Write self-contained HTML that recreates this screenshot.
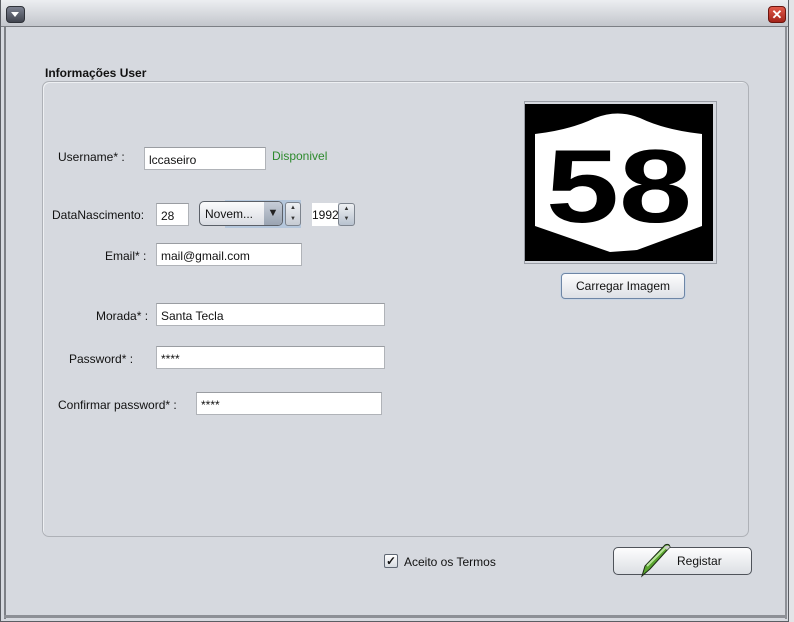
<!DOCTYPE html>
<html><head><style>
*{margin:0;padding:0;box-sizing:border-box}
body{width:794px;height:622px;background:#d6d9df;font-family:"Liberation Sans",sans-serif;font-size:12px;color:#111;position:relative;overflow:hidden}
.a{position:absolute}
.tf{position:absolute;background:#fff;border:1px solid #b0b3b8;border-top-color:#9a9da2;height:23px;padding:5px 0 0 4px;font-size:12px}
.lb{position:absolute;font-size:12px}
</style></head><body>
<div class="a" style="left:0;top:0;width:789px;height:622px;background:#d6d9df;border:1px solid #5b5e64;border-top:none"></div>
<div class="a" style="left:1px;top:0;width:787px;height:27px;background:linear-gradient(#eceef1,#c3c6cc);border-bottom:1px solid #7c7f85"></div>
<div class="a" style="left:4px;top:27px;width:2px;height:592px;background:#7d8086"></div>
<div class="a" style="left:785px;top:27px;width:2px;height:592px;background:#8d9096"></div>
<div class="a" style="left:4px;top:615px;width:783px;height:3px;background:#8d9096"></div>
<div class="a" style="left:789px;top:0;width:5px;height:622px;background:#e3e4e7"></div>
<div class="a" style="left:6px;top:6px;width:19px;height:17px;border-radius:4px;background:linear-gradient(#7c8190,#41454f);border:1px solid #2f3239"></div>
<div class="a" style="left:11px;top:12px;width:0;height:0;border-left:4px solid transparent;border-right:4px solid transparent;border-top:5px solid #fff"></div>
<div class="a" style="left:768px;top:6px;width:18px;height:17px;border-radius:4px;background:linear-gradient(#e05a4a,#a3231a);border:1px solid #6b1610;color:#fff;font-weight:bold;font-size:13px;line-height:15px;text-align:center">✕</div>
<div class="a" style="left:45px;top:66px;font-weight:bold;font-size:12px">Informações User</div>
<div class="a" style="left:42px;top:81px;width:707px;height:456px;border:1px solid #aeb1b7;border-radius:7px;box-shadow:inset 1px 1px 0 #eef0f3"></div>
<div class="lb" style="left:58px;top:150px">Username* :</div>
<div class="tf" style="left:144px;top:147px;width:122px">lccaseiro</div>
<div class="lb" style="left:272px;top:149px;color:#2d8a2d">Disponivel</div>
<div class="lb" style="left:52px;top:208px">DataNascimento:</div>
<div class="tf" style="left:156px;top:203px;width:33px">28</div>
<div class="a" style="left:225px;top:200px;width:76px;height:28px;background:#b5c7dc"></div>
<div class="a" style="left:199px;top:201px;width:84px;height:25px;border:1px solid #5b6068;border-radius:5px;background:linear-gradient(#fbfbfc,#d9dce2);padding:5px 0 0 5px">Novem...</div>
<div class="a" style="left:264px;top:202px;width:18px;height:23px;background:linear-gradient(#c6cdd8,#9aa4b2);border-radius:0 4px 4px 0;color:#222;font-size:11px;text-align:center;line-height:23px">▼</div>
<div class="a" style="left:285px;top:202px;width:16px;height:24px;border:1px solid #7d848e;border-radius:3px;background:linear-gradient(#eef0f3,#c6cbd3);font-size:6px;text-align:center;line-height:11px;color:#333">▲<br>▼</div>
<div class="a" style="left:312px;top:203px;width:26px;height:23px;background:#fff;padding-top:5px">1992</div>
<div class="a" style="left:338px;top:203px;width:17px;height:23px;border:1px solid #7d848e;border-radius:3px;background:linear-gradient(#eef0f3,#b8c2cf);font-size:6px;text-align:center;line-height:10px;color:#333">▲<br>▼</div>
<div class="lb" style="left:105px;top:249px">Email* :</div>
<div class="tf" style="left:156px;top:243px;width:146px">mail@gmail.com</div>
<div class="lb" style="left:96px;top:309px">Morada* :</div>
<div class="tf" style="left:156px;top:303px;width:229px">Santa Tecla</div>
<div class="lb" style="left:69px;top:352px">Password* :</div>
<div class="tf" style="left:156px;top:346px;width:229px">****</div>
<div class="lb" style="left:58px;top:398px">Confirmar password* :</div>
<div class="tf" style="left:196px;top:392px;width:186px">****</div>
<div class="a" style="left:524px;top:101px;width:193px;height:163px;border:1px solid #9a9ea6;background:#d6d9df"></div>
<svg class="a" style="left:525px;top:104px" width="188" height="157" viewBox="0 0 188 157">
<rect width="188" height="157" fill="#000"/>
<path d="M10 30 Q45 26 70 14 Q93 5 115 14 Q140 26 177 30 L177 122 Q150 132 112 146 L85 148 L10 122 Z" fill="#fff"/>
<text x="21" y="118" font-family="Liberation Sans,sans-serif" font-weight="bold" font-size="104" fill="#000" textLength="146" lengthAdjust="spacingAndGlyphs">58</text>
</svg>
<div class="a" style="left:561px;top:273px;width:124px;height:26px;border:1px solid #6e86a6;border-radius:4px;background:linear-gradient(#fdfdfe,#dde0e6);text-align:center;line-height:24px;font-size:12px;box-shadow:0 0 0 1px #c9d5e4">Carregar Imagem</div>
<div class="a" style="left:384px;top:554px;width:14px;height:14px;border:1px solid #5e6672;border-radius:2px;background:linear-gradient(#fff,#d6dae0);font-size:12px;line-height:12px;text-align:center;font-weight:bold">✓</div>
<div class="lb" style="left:404px;top:555px">Aceito os Termos</div>
<div class="a" style="left:613px;top:547px;width:139px;height:28px;border:1px solid #4f535a;border-radius:5px;background:linear-gradient(#fdfdfe,#dcdfe4);padding:6px 0 0 63px;font-size:12px">Registar</div>
<svg class="a" style="left:638px;top:542px" width="36" height="36" viewBox="0 0 36 36">
<path d="M4 34 L7 24 L27 3 Q31 1 32 5 L12 27 Z" fill="#5aa52f" stroke="#1d2a18" stroke-width="1"/>
<path d="M9 24 L28 5" stroke="#b8e59a" stroke-width="2"/>
<path d="M26 5 Q30 2 32 5 L29 8 Z" fill="#ccc"/>
</svg>
</body></html>
